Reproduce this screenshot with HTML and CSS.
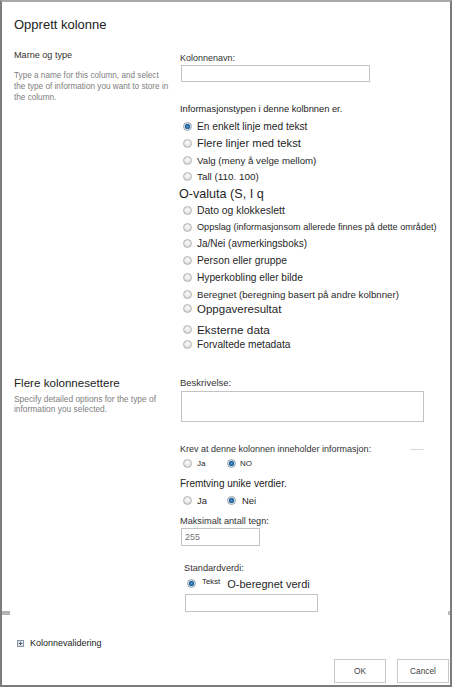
FILE: index.html
```html
<!DOCTYPE html>
<html lang="no">
<head>
  <meta charset="UTF-8">
  <meta name="viewport" content="width=device-width, initial-scale=1.0">
  <title>Opprett kolonne</title>
  <link rel="stylesheet" href="styles.css">
</head>
<body>
  <div class="dialog">
    <div class="form-body">
      <h1 class="title">Opprett kolonne</h1>

      <div class="section section-type">
        <div class="section-info">
          <h2 class="section-name">Marne og type</h2>
          <p class="section-desc">Type a name for this column, and select the type of information you want to store in the column.</p>
        </div>
        <div class="section-fields">
          <label class="field-label">Kolonnenavn:</label>
          <input type="text" class="text-input name-input">

          <div class="field-label info-label">Informasjonstypen i denne kolbnnen er.</div>
          <ul class="type-list">
            <li class="type-option"><input type="radio" class="radio" name="type" checked><span class="opt-single">En enkelt linje med tekst</span></li>
            <li class="type-option"><input type="radio" class="radio" name="type"><span class="opt-multi">Flere linjer med tekst</span></li>
            <li class="type-option"><input type="radio" class="radio" name="type"><span class="opt-choice">Valg (meny å velge mellom)</span></li>
            <li class="type-option"><input type="radio" class="radio" name="type"><span class="opt-number">Tall (110. 100)</span></li>
            <li class="type-option type-option-bare"><span class="opt-currency">O-valuta (S, I q</span></li>
            <li class="type-option"><input type="radio" class="radio" name="type"><span class="opt-date">Dato og klokkeslett</span></li>
            <li class="type-option"><input type="radio" class="radio" name="type"><span class="opt-lookup">Oppslag (informasjonsom allerede finnes på dette området)</span></li>
            <li class="type-option"><input type="radio" class="radio" name="type"><span class="opt-yesno">Ja/Nei (avmerkingsboks)</span></li>
            <li class="type-option"><input type="radio" class="radio" name="type"><span class="opt-person">Person eller gruppe</span></li>
            <li class="type-option"><input type="radio" class="radio" name="type"><span class="opt-link">Hyperkobling eller bilde</span></li>
            <li class="type-option"><input type="radio" class="radio" name="type"><span class="opt-calc">Beregnet (beregning basert på andre kolbnner)</span></li>
            <li class="type-option type-option-task"><input type="radio" class="radio" name="type"><span class="opt-task">Oppgaveresultat</span></li>
            <li class="type-option type-option-external"><input type="radio" class="radio" name="type"><span class="opt-external">Eksterne data</span></li>
            <li class="type-option type-option-managed"><input type="radio" class="radio" name="type"><span class="opt-managed">Forvaltede metadata</span></li>
          </ul>
        </div>
      </div>

      <div class="section section-more">
        <div class="section-info">
          <h2 class="section-name section-name-large">Flere kolonnesettere</h2>
          <p class="section-desc section-desc-tight">Specify detailed options for the type of information you selected.</p>
        </div>
        <div class="section-fields section-fields-more">
          <label class="field-label label-desc">Beskrivelse:</label>
          <textarea class="text-area"></textarea>

          <div class="field-label label-rule">Krev at denne kolonnen inneholder informasjon:<span class="rule"></span></div>
          <div class="choice-row">
            <span class="choice"><input type="radio" class="radio" name="required"><span class="choice-small">Ja</span></span>
            <span class="choice choice-tight"><input type="radio" class="radio" name="required" checked><span class="choice-small">NO</span></span>
          </div>

          <div class="field-label label-unique">Fremtving unike verdier.</div>
          <div class="choice-row">
            <span class="choice"><input type="radio" class="radio" name="unique"><span class="choice-text">Ja</span></span>
            <span class="choice choice-wide"><input type="radio" class="radio" name="unique" checked><span class="choice-text">Nei</span></span>
          </div>

          <label class="field-label label-max">Maksimalt antall tegn:</label>
          <input type="text" class="text-input max-input" value="255">

          <div class="default-block">
            <label class="field-label label-default">Standardverdi:</label>
            <div class="choice-row default-row">
              <input type="radio" class="radio" name="default" checked>
              <span class="default-text">Tekst</span>
              <span class="default-calc">O-beregnet verdi</span>
            </div>
            <input type="text" class="text-input default-input">
          </div>
        </div>
      </div>
    </div>

    <div class="hscroll">
      <span class="hscroll-thumb"></span>
      <span class="hscroll-end"></span>
    </div>

    <div class="validation">
      <svg class="expand-icon" width="7" height="7" viewBox="0 0 7 7">
        <rect x="0.5" y="0.5" width="6" height="6" fill="#dfe3ea" stroke="#8893a3"/>
        <path d="M3.5 1.8v3.4M1.8 3.5h3.4" stroke="#4b5a6f" stroke-width="1"/>
      </svg>
      <span>Kolonnevalidering</span>
    </div>

    <div class="actions">
      <button class="button">OK</button>
      <button class="button">Cancel</button>
    </div>
  </div>
</body>
</html>
```

FILE: styles.css
```css
body {
  margin: 0;
  background: #fff;
  font-family: "Liberation Sans", Arial, sans-serif;
  color: #262626;
}

.dialog {
  width: 452px;
  height: 687px;
  box-sizing: border-box;
  border: 2px solid #7c7c7c;
  border-top-color: #a9a9a9;
  display: flex;
  flex-direction: column;
  overflow: hidden;
}

.form-body {
  height: 609px;
  flex: none;
}

.title {
  margin: 0;
  padding: 15px 12px 0;
  font-size: 13px;
  line-height: 16px;
  font-weight: normal;
  color: #222;
}

.section {
  display: grid;
  grid-template-columns: 178px 1fr;
}

.section-type {
  margin-top: 15.5px;
}

.section-more {
  margin-top: 21.7px;
}

.section-info {
  padding-left: 12px;
}

.section-name {
  margin: 0;
  font-size: 9.1px;
  line-height: 12px;
  font-weight: normal;
  color: #333;
}

.section-name-large {
  font-size: 11.6px;
  line-height: 15px;
  color: #222;
}

.section-desc {
  margin: 9.5px 0 0;
  max-width: 156px;
  font-size: 8.2px;
  line-height: 11px;
  color: #808080;
}

.section-desc-tight {
  margin-top: 4.2px;
  font-size: 8.4px;
  line-height: 10.5px;
}

.section-fields {
  padding-top: 3.8px;
}

.section-fields-more {
  padding-top: 2.5px;
}

.field-label {
  display: block;
  font-size: 9px;
  line-height: 12px;
  color: #333;
}

.text-input {
  display: block;
  box-sizing: border-box;
  margin: 0.7px 0 0 1px;
  height: 17px;
  padding: 0 3px;
  border: 1px solid #c3c3c3;
  font-family: "Liberation Sans", Arial, sans-serif;
  font-size: 9px;
  color: #777;
  outline: none;
}

.name-input {
  width: 189px;
}

.info-label {
  margin-top: 21.4px;
  font-size: 9.3px;
  color: #222;
}

.type-list {
  margin: 2.8px 0 0;
  padding: 0 0 0 3px;
  list-style: none;
  color: #1f1f1f;
}

.type-option {
  display: flex;
  align-items: center;
  gap: 5px;
  height: 16.77px;
  white-space: nowrap;
}

.type-option-bare {
  margin-left: -4px;
}

.type-option-task {
  margin-top: -2px;
}

.type-option-external {
  margin-top: 4px;
}

.type-option-managed {
  margin-top: -2px;
}

.opt-single { font-size: 10.2px; }
.opt-multi { font-size: 11.2px; }
.opt-choice { font-size: 9.7px; }
.opt-number { font-size: 9.9px; }
.opt-currency { font-size: 12.6px; }
.opt-date { font-size: 10.4px; }
.opt-lookup { font-size: 9.1px; }
.opt-yesno { font-size: 10px; }
.opt-person { font-size: 10.3px; }
.opt-link { font-size: 10.2px; }
.opt-calc { font-size: 9.7px; }
.opt-task { font-size: 11.5px; }
.opt-external { font-size: 11.8px; }
.opt-managed { font-size: 10.2px; }

.radio {
  appearance: none;
  -webkit-appearance: none;
  flex: none;
  box-sizing: border-box;
  width: 9px;
  height: 9px;
  margin: 0;
  border: 1px solid #b5b5b5;
  border-radius: 50%;
  background: radial-gradient(circle at 50% 40%, #fdfdfd 0, #e6e6e6 3px, #d4d4d4 4px);
}

.radio:checked {
  border-color: #97a3ae;
  background: radial-gradient(circle, #5b9fd8 0, #1d5f98 1.8px, #2f6c9e 2.3px, #d3dde6 3px, #ececec 4px);
}

.label-desc {
  font-size: 9.5px;
}

.text-area {
  display: block;
  box-sizing: border-box;
  width: 243px;
  height: 31px;
  margin: 1.5px 0 0 1px;
  padding: 2px;
  border: 1px solid #c3c3c3;
  resize: none;
  outline: none;
}

.label-rule {
  display: flex;
  align-items: center;
  width: 244px;
  margin-top: 21.5px;
}

.rule {
  margin-left: auto;
  width: 14px;
  height: 1px;
  background: #d9d9d9;
}

.choice-row {
  display: flex;
  align-items: center;
  height: 14px;
  margin-top: 1.5px;
  padding-left: 3px;
}

.choice {
  display: flex;
  align-items: center;
  gap: 5px;
  width: 44px;
}

.choice-tight {
  gap: 4px;
}

.choice-wide {
  gap: 6px;
}

.choice-small {
  font-size: 8px;
}

.choice-text {
  font-size: 9.4px;
}

.label-unique {
  margin-top: 7.5px;
  font-size: 10px;
  color: #222;
}

.label-unique + .choice-row {
  margin-top: 3px;
}

.label-max {
  margin-top: 8px;
  font-size: 9.2px;
}

.max-input {
  width: 79px;
  height: 18px;
  margin-top: 0.5px;
  font-size: 9px;
}

.default-block {
  padding-left: 4px;
  margin-top: 16px;
}

.label-default {
  font-size: 9.2px;
}

.default-row {
  margin-top: 3px;
}

.default-text {
  margin: 0 0 4px 6px;
  font-size: 7.8px;
}

.default-calc {
  margin-left: 7px;
  font-size: 11px;
  color: #1f1f1f;
}

.default-input {
  width: 133px;
  height: 18px;
  margin-top: 3px;
}

.hscroll {
  display: flex;
  justify-content: space-between;
  height: 4px;
  flex: none;
}

.hscroll-thumb {
  width: 8px;
  background: #b4b4b4;
}

.hscroll-end {
  width: 2px;
  background: #bdbdbd;
}

.validation {
  display: flex;
  align-items: center;
  gap: 6px;
  margin-top: 22px;
  padding-left: 15px;
  font-size: 9px;
  line-height: 12px;
  color: #222;
}

.expand-icon {
  flex: none;
}

.actions {
  display: flex;
  justify-content: flex-end;
  gap: 11px;
  margin-top: 10px;
  padding-right: 1px;
}

.button {
  width: 52px;
  height: 24px;
  padding: 0;
  border: 1px solid #c8c8c8;
  background: #fff;
  font-family: "Liberation Sans", Arial, sans-serif;
  font-size: 8.3px;
  color: #444;
}
```
